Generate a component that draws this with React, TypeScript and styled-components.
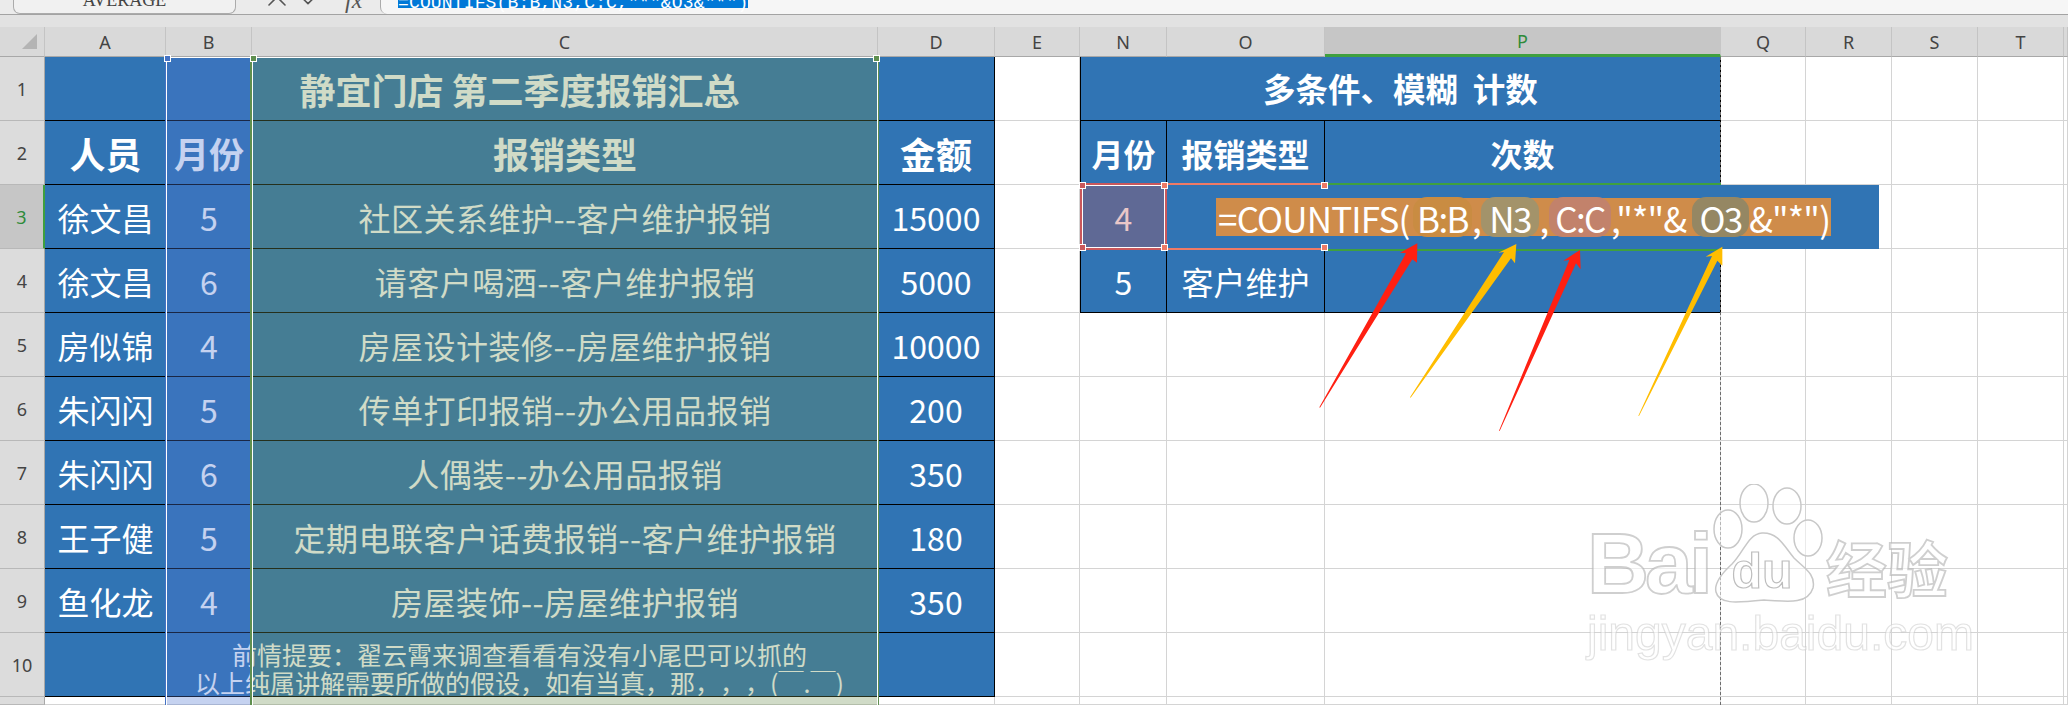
import * as React from 'react';
import styled, { createGlobalStyle } from 'styled-components';
import { Check, X } from 'lucide-react';

const FILL = '#3074b4';
const COLUMNS = '45px 121px 86px 626px 117px 85px 87px 158px 396px 85px 86px 86px 86px 1fr';

const GlobalStyle = createGlobalStyle`
  html, body {
    margin: 0;
    padding: 0;
    background: #fff;
  }
  body {
    font-family: "Noto Sans CJK SC", "Noto Sans", sans-serif;
    text-spacing-trim: space-all;
  }
`;

const Page = styled.div`
  position: relative;
  width: 2068px;
  height: 705px;
  overflow: hidden;
  background: #fff;
`;

const TopBar = styled.div`
  display: flex;
  align-items: flex-start;
  height: 14px;
  background: #ebebeb;
  border-bottom: 1px solid #a3a3a3;
  overflow: hidden;
`;

const NameBox = styled.div`
  box-sizing: border-box;
  width: 223px;
  height: 14px;
  margin-left: 13px;
  border: 1px solid #ababab;
  border-top: 0;
  border-radius: 0 0 7px 7px;
  background: #f1f1f1;
  color: #444;
  font: 18px/0 "Liberation Serif", serif;
  text-align: center;
`;

const BarIcons = styled.div`
  display: flex;
  align-items: flex-end;
  gap: 3px;
  flex: none;
  width: 144px;
  height: 13px;
  padding-left: 25px;
  box-sizing: border-box;
  color: #555;

  svg {
    flex: none;
  }
`;

const FxMark = styled.span`
  margin-left: 14px;
  margin-bottom: 11px;
  font: italic 24px/3px "Liberation Serif", serif;
`;

const FormulaBox = styled.div`
  flex: 1;
  height: 14px;
  padding-left: 17px;
  border-left: 1px solid #ababab;
  border-bottom-left-radius: 7px;
  background: #f6f6f6;
`;

const Selected = styled.div`
  width: fit-content;
  height: 8px;
  background: #0078d7;
  color: #fff;
  font: 18px/6px "Liberation Mono", monospace;
  letter-spacing: 0.15px;
  white-space: nowrap;
`;

const ColumnBar = styled.div`
  display: grid;
  grid-template-columns: ${COLUMNS};
  height: 42px;
  background: #e2e2e2;
  box-sizing: border-box;
`;

const ColHead = styled.div<{ $active?: boolean }>`
  box-sizing: border-box;
  display: flex;
  align-items: center;
  justify-content: center;
  margin-top: 12px;
  padding-top: 1px;
  background: ${(p) => (p.$active ? '#c6c6c6' : '#d9d9d9')};
  border-right: 1px solid ${(p) => (p.$active ? '#c6c6c6' : '#c4c4c4')};
  border-bottom: ${(p) => (p.$active ? '3px solid #3fa03f' : '1px solid #a8a8a8')};
  color: ${(p) => (p.$active ? '#2e8b3a' : '#444')};
  font: 18px/1 "Noto Sans", sans-serif;
`;

const Corner = styled(ColHead)`
  justify-content: flex-end;
  padding: 0 7px 0 0;
`;

const Triangle = styled.div`
  width: 0;
  height: 0;
  border-left: 15px solid transparent;
  border-bottom: 15px solid #b4b4b4;
`;

const Sheet = styled.div`
  position: relative;
  display: grid;
  grid-template-columns: ${COLUMNS};
  grid-template-rows: repeat(10, 64px) 1fr;
  height: 648px;
`;

const RowHead = styled.div<{ $active?: boolean }>`
  box-sizing: border-box;
  display: flex;
  align-items: center;
  justify-content: center;
  background: ${(p) => (p.$active ? '#c6c6c6' : '#dcdcdc')};
  border-right: ${(p) => (p.$active ? '2px solid #3fa03f' : '1px solid #a8a8a8')};
  border-bottom: 1px solid #b8b8b8;
  color: ${(p) => (p.$active ? '#2e8b3a' : '#444')};
  font: 18px/1 "Noto Sans", sans-serif;
`;

const Blank = styled.div`
  box-sizing: border-box;
  background: #fff;
  border-right: 1px solid #d4d4d4;
  border-bottom: 1px solid #d4d4d4;
`;

const Cell = styled.div<{ $span?: number; $size?: number; $bold?: boolean; $left?: boolean; $open?: boolean }>`
  box-sizing: border-box;
  grid-column: span ${(p) => p.$span ?? 1};
  display: flex;
  align-items: center;
  justify-content: center;
  min-width: 0;
  background: ${FILL};
  border-right: ${(p) => (p.$open ? '0' : '1px solid #000')};
  border-left: ${(p) => (p.$left ? '1px solid #000' : '0')};
  border-bottom: 1px solid #000;
  color: #fff;
  font-size: ${(p) => p.$size ?? 32}px;
  font-weight: ${(p) => (p.$bold ? 700 : 400)};
  line-height: 1;
  white-space: pre;
`;

const LongCell = styled(Cell)`
  letter-spacing: 0.5px;
`;

const NoteCell = styled(Cell)`
  flex-direction: column;
  justify-content: flex-start;
  overflow: hidden;
  padding-top: 7px;
  font-size: 25px;
  line-height: 28px;
`;

const Range = styled.div<{ $col: number; $tint: string; $edge: string; $closed?: boolean }>`
  position: absolute;
  inset: 0;
  grid-column: ${(p) => p.$col} / ${(p) => p.$col + 1};
  grid-row: 1 / -1;
  background: ${(p) => p.$tint};
  border-top: 1px solid #fff;
  border-left: 1px solid #fff;
  border-right: ${(p) => (p.$closed ? '1px solid #fff' : '0')};
  box-shadow: ${(p) => p.$edge};
  pointer-events: none;
`;

const Handle = styled.i<{ $color: string; $x: 'left' | 'right'; $y: 'top' | 'bottom' }>`
  position: absolute;
  ${(p) => p.$x}: -3px;
  ${(p) => p.$y}: -3px;
  box-sizing: border-box;
  width: 7px;
  height: 7px;
  background: ${(p) => p.$color};
  border: 1px solid #fff;
`;

const PageBreak = styled.div`
  position: absolute;
  inset: 0;
  grid-column: 9 / 10;
  grid-row: 1 / -1;
  border-right: 1px dashed #6d6d6d;
  pointer-events: none;
`;

const RefCell = styled.div`
  position: absolute;
  inset: -2px 0 -1px 0;
  grid-column: 7 / 8;
  grid-row: 3 / 4;
  box-sizing: border-box;
  background: rgba(190, 86, 88, 0.33);
  border: 2px solid #c9585c;
  box-shadow: inset 0 0 0 1px #fff;
`;

const RefEdge = styled.div`
  position: absolute;
  inset: -2px 0 -1px 0;
  grid-column: 8 / 9;
  grid-row: 3 / 4;
  border-top: 2px solid #ee7a66;
  border-bottom: 2px solid #ee7a66;
`;

const GreenEdge = styled.div`
  position: absolute;
  inset: -2px 0 -2px 0;
  grid-column: 9 / 10;
  grid-row: 3 / 4;
  border-top: 2px solid #3fa03f;
  border-bottom: 2px solid #3fa03f;
`;

const Editor = styled.div`
  position: absolute;
  top: 0;
  bottom: 0;
  left: 0;
  width: 712px;
  grid-column: 8 / 9;
  grid-row: 3 / 4;
  display: flex;
  align-items: center;
  padding-left: 49px;
  box-sizing: border-box;
  background: ${FILL};
`;

const EditorText = styled.div`
  display: flex;
  align-items: center;
  width: 615px;
  height: 38px;
  padding-left: 2px;
  box-sizing: border-box;
  background: #cf8c4a;
  color: #fff;
  font-size: 35px;
  line-height: 1;
  white-space: nowrap;
`;

const Plain = styled.span<{ $w: number; $center?: boolean }>`
  flex: none;
  width: ${(p) => p.$w}px;
  letter-spacing: -0.8px;
  text-align: ${(p) => (p.$center ? 'center' : 'left')};
`;

const RefToken = styled.span<{ $w: number; $tint: string }>`
  flex: none;
  width: ${(p) => p.$w}px;
  height: 40px;
  margin: -1px 0;
  display: flex;
  align-items: center;
  justify-content: center;
  border-radius: 14px;
  background: ${(p) => p.$tint};
  letter-spacing: -1.6px;
`;

const Arrows = styled.svg`
  position: absolute;
  left: 1280px;
  top: 240px;
  width: 500px;
  height: 200px;
`;

const Watermark = styled.div`
  position: absolute;
  left: 1587px;
  top: 484px;
  width: 380px;
  pointer-events: none;
  filter: blur(0.6px);
  font-family: "Liberation Sans", sans-serif;
  font-weight: 700;
  color: rgba(255, 255, 255, 0.6);
  -webkit-text-stroke: 1.8px rgba(175, 175, 175, 0.6);
`;

const MarkRow = styled.div`
  display: flex;
  align-items: flex-end;
  height: 120px;
`;

const Bai = styled.span`
  width: 125px;
  font-size: 86px;
  line-height: 82px;
  letter-spacing: -4px;
`;

const Paw = styled.svg`
  flex: none;
  width: 112px;
  height: 120px;
`;

const Jing = styled.span`
  font-family: "Noto Sans CJK SC", sans-serif;
  font-size: 61px;
  line-height: 74px;
  margin-left: 2px;
`;

const Url = styled.div`
  margin-top: 2px;
  font-size: 48px;
  line-height: 56px;
  font-weight: 400;
  -webkit-text-stroke: 1.2px rgba(190, 190, 190, 0.45);
  white-space: nowrap;
`;

const colLabels = ['A', 'B', 'C', 'D', 'E', 'N', 'O', 'P', 'Q', 'R', 'S', 'T', ''];

const rows = [
  ['徐文昌', '5', '社区关系维护--客户维护报销', '15000'],
  ['徐文昌', '6', '请客户喝酒--客户维护报销', '5000'],
  ['房似锦', '4', '房屋设计装修--房屋维护报销', '10000'],
  ['朱闪闪', '5', '传单打印报销--办公用品报销', '200'],
  ['朱闪闪', '6', '人偶装--办公用品报销', '350'],
  ['王子健', '5', '定期电联客户话费报销--客户维护报销', '180'],
  ['鱼化龙', '4', '房屋装饰--房屋维护报销', '350'],
];

const arrows = [
  { color: '#ff2012', points: '118,502 378,40 360,38 412,10 411,68 397,58 120,503' },
  { color: '#ffbd00', points: '390,472 672,36 655,38 709,12 705,70 693,55 392,473' },
  { color: '#ff2012', points: '657,572 868,60 850,62 900,30 902,88 888,70 659,573' },
  { color: '#ffbd00', points: '1075,527 1296,48 1277,50 1327,20 1327,77 1312,62 1077,528' },
];

const BlankCols = ({ count }: { count: number }) => (
  <>
    {Array.from({ length: count }, (_, i) => (
      <Blank key={i} />
    ))}
  </>
);

export default function App() {
  return (
    <Page>
      <GlobalStyle />
      <TopBar>
        <NameBox>AVERAGE</NameBox>
        <BarIcons>
          <X size={32} strokeWidth={1.2} />
          <Check size={32} strokeWidth={1.2} />
          <FxMark>fx</FxMark>
        </BarIcons>
        <FormulaBox>
          <Selected>=COUNTIFS(B:B,N3,C:C,"*"&amp;O3&amp;"*")</Selected>
        </FormulaBox>
      </TopBar>

      <ColumnBar>
        <Corner>
          <Triangle />
        </Corner>
        {colLabels.map((label, i) => (
          <ColHead key={i} $active={label === 'P'}>
            {label}
          </ColHead>
        ))}
      </ColumnBar>

      <Sheet>
        <RowHead>1</RowHead>
        <Cell $span={4} $size={36} $bold>
          静宜门店 第二季度报销汇总
        </Cell>
        <Blank />
        <Cell $span={3} $size={32.5} $bold $left>
          多条件、模糊  计数
        </Cell>
        <BlankCols count={5} />

        <RowHead>2</RowHead>
        <Cell $size={36} $bold $open>人员</Cell>
        <Cell $size={35} $bold $open>月份</Cell>
        <Cell $size={36} $bold $open>报销类型</Cell>
        <Cell $size={36} $bold>金额</Cell>
        <Blank />
        <Cell $bold $left>月份</Cell>
        <Cell $bold>报销类型</Cell>
        <Cell $bold>次数</Cell>
        <BlankCols count={5} />

        {rows.map((row, i) => (
          <React.Fragment key={i}>
            <RowHead $active={i === 0}>{i + 3}</RowHead>
            <Cell $open>{row[0]}</Cell>
            <Cell $open>{row[1]}</Cell>
            <LongCell $open>{row[2]}</LongCell>
            <Cell>{row[3]}</Cell>
            <Blank />
            {i === 0 && (
              <>
                <Cell $left>4</Cell>
                <Cell />
                <Cell />
              </>
            )}
            {i === 1 && (
              <>
                <Cell $left>5</Cell>
                <Cell>客户维护</Cell>
                <Cell />
              </>
            )}
            {i > 1 && <BlankCols count={3} />}
            <BlankCols count={5} />
          </React.Fragment>
        ))}

        <RowHead>10</RowHead>
        <NoteCell $span={4}>
          <span>前情提要：翟云霄来调查看看有没有小尾巴可以抓的</span>
          <span>以上纯属讲解需要所做的假设，如有当真，那，，，(￣.￣)</span>
        </NoteCell>
        <BlankCols count={9} />

        <RowHead />
        <BlankCols count={13} />

        <Range $col={3} $tint="rgba(79, 118, 209, 0.33)" $edge="-1px 0 0 #4472c4">
          <Handle $color="#4472c4" $x="left" $y="top" />
        </Range>
        <Range
          $col={4}
          $tint="rgba(112, 145, 85, 0.33)"
          $edge="-2px 0 0 #5f8f4f, 1px 0 0 #5f8f4f"
          $closed
        >
          <Handle $color="#5f8f4f" $x="left" $y="top" />
          <Handle $color="#5f8f4f" $x="right" $y="top" />
        </Range>

        <PageBreak />
        <GreenEdge />
        <Editor>
          <EditorText>
            <Plain $w={195}>=COUNTIFS(</Plain>
            <RefToken $w={59} $tint="#c98c42">B:B</RefToken>
            <Plain $w={9} $center>,</Plain>
            <RefToken $w={58} $tint="#a3936a">N3</RefToken>
            <Plain $w={10} $center>,</Plain>
            <RefToken $w={62} $tint="#c2826b">C:C</RefToken>
            <Plain $w={81}>,"*"&amp;</Plain>
            <RefToken $w={57} $tint="#958763">O3</RefToken>
            <Plain $w={82}>&amp;"*")</Plain>
          </EditorText>
        </Editor>
        <RefEdge>
          <Handle $color="#ee7a66" $x="right" $y="top" />
          <Handle $color="#ee7a66" $x="right" $y="bottom" />
        </RefEdge>
        <RefCell>
          <Handle $color="#c9585c" $x="left" $y="top" />
          <Handle $color="#ee7a66" $x="right" $y="top" />
          <Handle $color="#c9585c" $x="left" $y="bottom" />
          <Handle $color="#ee7a66" $x="right" $y="bottom" />
        </RefCell>
      </Sheet>

      <Arrows viewBox="0 0 1500 600">
        {arrows.map((arrow) => (
          <polygon key={arrow.points} points={arrow.points} fill={arrow.color} />
        ))}
      </Arrows>

      <Watermark>
        <MarkRow>
          <Bai>Bai</Bai>
          <Paw viewBox="0 0 112 120">
            <g fill="rgba(255,255,255,.5)" stroke="#c8c8c8" strokeWidth="1.5">
              <ellipse cx="16" cy="45" rx="14" ry="19" />
              <ellipse cx="42" cy="19" rx="14" ry="19" />
              <ellipse cx="75" cy="22" rx="14" ry="18" />
              <ellipse cx="96" cy="54" rx="14" ry="18" />
              <path d="M50 49 C36 50 32 68 20 80 C8 91 2 100 4 108 C7 120 22 119 52 116 C78 118 96 120 101 104 C104 90 92 84 82 74 C72 62 66 48 50 49 Z" />
            </g>
            <text
              x="50"
              y="104"
              textAnchor="middle"
              fontSize="50"
              fontFamily="Liberation Sans, sans-serif"
              fontWeight="700"
              fill="rgba(255,255,255,.6)"
              stroke="#bdbdbd"
              strokeWidth="1.2"
            >
              du
            </text>
          </Paw>
          <Jing>经验</Jing>
        </MarkRow>
        <Url>jingyan.baidu.com</Url>
      </Watermark>
    </Page>
  );
}
